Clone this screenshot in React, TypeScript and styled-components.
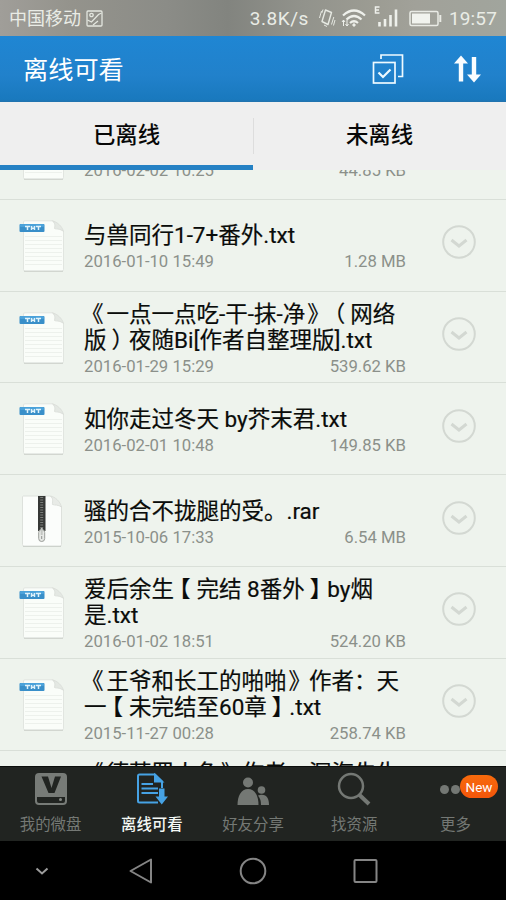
import React from "react";
import styled, { createGlobalStyle } from "styled-components";

const GlobalStyle = createGlobalStyle`
  * { box-sizing: border-box; }
  body {
    margin: 0;
    background: #000;
    font-family: Roboto, "Noto Sans CJK SC", sans-serif;
    text-spacing-trim: space-all;
  }
`;

const Screen = styled.div`
  width: 506px;
  height: 900px;
  display: flex;
  flex-direction: column;
  overflow: hidden;
  background: #eef3ed;
`;

const StatusBar = styled.header`
  height: 36px;
  flex: none;
  display: flex;
  align-items: center;
  padding: 0 9px;
  color: #e9ece6;
  font-size: 19px;
  line-height: 36px;
  background: linear-gradient(90deg, #a09e99 0, #94938c 14%, #8b8c87 33%, #82847f 45%, #92938c 60%, #9c9c93 74%, #a1a199 82%, #a1a59d 100%);
`;

const Carrier = styled.span`
  font-size: 18px;
  width: 77px;
  padding-top: 2px;
  white-space: nowrap;
`;

const Speed = styled.span`
  margin-left: auto;
  padding-top: 2px;
  letter-spacing: 0.55px;
`;

const StatusIcon = styled.svg<{ $gap?: number }>`
  flex: none;
  margin-left: ${(p) => p.$gap ?? 0}px;
`;

const Clock = styled.span`
  margin-left: 7px;
  padding-top: 2px;
  letter-spacing: 0.15px;
`;

const TitleBar = styled.div`
  height: 66px;
  flex: none;
  display: flex;
  align-items: center;
  padding: 0 24px 0 23px;
  background: linear-gradient(#1f86d3, #2181cb 60%, #1979be 96%, #2272ac);
`;

const Title = styled.h1`
  margin: 0 auto 0 0;
  padding-top: 3px;
  color: #fff;
  font-size: 25.2px;
  line-height: 63px;
  font-weight: 400;
`;

const SortIcon = styled.svg`
  margin-left: 49px;
`;

const Tabs = styled.nav`
  height: 68px;
  flex: none;
  display: grid;
  grid-template-columns: 253px 253px;
  background: #efefef;
`;

const Tab = styled.div<{ $active?: boolean }>`
  padding-top: 3px;
  text-align: center;
  font-size: 22.4px;
  font-weight: 500;
  line-height: 60px;
  color: #080808;
  border-bottom: 5px solid ${(p) => (p.$active ? "#2581c4" : "#efefef")};
  ${(p) =>
    !p.$active &&
    `background: linear-gradient(#dddddd, #dddddd) 0 16px / 1px 36px no-repeat #efefef;`}
`;

const List = styled.main`
  flex: 1;
  min-height: 0;
  overflow: hidden;
`;

const Rows = styled.div`
  margin-top: -62px;
`;

const Row = styled.article`
  height: 91.8px;
  display: flex;
  border-bottom: 1px solid #d9dfd8;
  padding: 0 30px 0 19px;
`;

const FileIcon = styled.svg`
  flex: none;
  width: 46px;
  height: 54px;
  margin: 20px 19px 0 0;
`;

const Details = styled.div<{ $lines: number }>`
  width: 322px;
  height: 100%;
  display: flex;
  flex-direction: column;
  gap: ${(p) => (p.$lines > 1 ? 3 : 3)}px;
  padding-top: ${(p) => (p.$lines > 1 ? 9.3 : 22.5)}px;
`;

const Name = styled.div`
  font-size: 22.5px;
  line-height: 26px;
  color: #0a0c0a;
  white-space: pre;
  -webkit-text-stroke: 0.2px #0a0c0a;
`;

const Bracket = styled.span<{ $shift: number }>`
  display: inline-block;
  transform: translateX(${(p) => p.$shift}px);
`;

const Meta = styled.div`
  display: flex;
  justify-content: space-between;
  font-size: 16.7px;
  line-height: 21px;
  color: #8b908a;
`;

const Expand = styled.svg`
  flex: none;
  margin: 25.5px 0 0 auto;
`;

const BottomBar = styled.nav`
  height: 75px;
  flex: none;
  display: grid;
  grid-template-columns: repeat(5, 1fr);
  background: #212421;
  border-top: 1px solid #0c0e0c;
`;

const NavItem = styled.div<{ $active?: boolean }>`
  position: relative;
  display: flex;
  flex-direction: column;
  align-items: center;
  color: ${(p) => (p.$active ? "#f4f8f4" : "#747874")};
  font-size: 15.4px;
  font-weight: ${(p) => (p.$active ? 500 : 400)};
  line-height: 20px;
  padding-top: 3px;
`;

const NavGlyph = styled.svg`
  width: 40px;
  height: 40px;
  margin-bottom: 5px;
`;

const Badge = styled.span`
  position: absolute;
  top: 8px;
  right: 8px;
  width: 38px;
  height: 23px;
  border-radius: 12px;
  background: linear-gradient(#f76a0c, #f4560b);
  color: #fff;
  font-size: 13.5px;
  font-weight: 400;
  line-height: 24px;
  text-align: center;
`;

const SystemBar = styled.footer`
  height: 59px;
  flex: none;
  background: #000;
  display: flex;
  align-items: center;
  padding-left: 32px;
  gap: 76px;
`;

const SystemKey = styled.svg`
  flex: none;
`;

type FileKind = "txt" | "rar";
interface FileEntry {
  kind: FileKind;
  name: string;
  date: string;
  size: string;
}

const files: FileEntry[] = [
  { kind: "txt", name: " ", date: "2016-02-02 10:25", size: "44.85 KB" },
  { kind: "txt", name: "与兽同行1-7+番外.txt", date: "2016-01-10 15:49", size: "1.28 MB" },
  { kind: "txt", name: "《一点一点吃-干-抹-净》（网络\n版）夜随Bi[作者自整理版].txt", date: "2016-01-29 15:29", size: "539.62 KB" },
  { kind: "txt", name: "如你走过冬天 by芥末君.txt", date: "2016-02-01 10:48", size: "149.85 KB" },
  { kind: "rar", name: "骚的合不拢腿的受。.rar", date: "2015-10-06 17:33", size: "6.54 MB" },
  { kind: "txt", name: "爱后余生【完结 8番外】by烟\n是.txt", date: "2016-01-02 18:51", size: "524.20 KB" },
  { kind: "txt", name: "《王爷和长工的啪啪》作者：天\n一【未完结至60章】.txt", date: "2015-11-27 00:28", size: "258.74 KB" },
  { kind: "txt", name: "《德莱罗人鱼》作者：深海先生\n ", date: "", size: "" },
];

const bracketShift: Record<string, number> = {
  "《": -3,
  "》": 2,
  "（": -5,
  "）": 5,
  "【": -6,
  "】": 5,
};

function FileName({ text }: { text: string }) {
  return (
    <Name>
      {text.split(/([《》（）【】])/).map((part, i) =>
        part in bracketShift ? (
          <Bracket key={i} $shift={bracketShift[part]}>
            {part}
          </Bracket>
        ) : (
          part
        ),
      )}
    </Name>
  );
}

function FileGlyph({ kind }: { kind: FileKind }) {
  if (kind === "rar") {
    return (
      <FileIcon viewBox="0 0 46 54">
        <path d="M4 1H31.500L42.500 12V49.500Q42.500 51 41 51H5Q3.500 51 3.500 49.500V1.500Z" fill="#fbfdfb" stroke="#dde1dc" />
        <path d="M4 51.500H42" stroke="#cdd2cc" />
        <path d="M31.500 1C35 4 33 8 33.500 9.500C36 10.500 39 9.500 42.500 12C41 6 36 2 31.500 1Z" fill="#e8ebe7" stroke="#d8dcd7" strokeWidth=".8" />
        <rect x="19" y="1" width="7.500" height="35" fill="#363836" />
        <path d="M22.700 2V33" stroke="#7c7f7c" strokeWidth="3" strokeDasharray="1 1.500" />
        <rect x="19.700" y="34.500" width="6" height="12" rx="3" fill="#e7e9e6" stroke="#9a9d99" />
        <path d="M22.700 33V40" stroke="#c3c6c2" strokeWidth="2" />
        <path d="M22.700 41V44" stroke="#8e928e" />
      </FileIcon>
    );
  }
  return (
    <FileIcon viewBox="0 0 46 54">
      <path d="M6 .8H33.500L44.500 11V49.500Q44.500 51 43 51H6Q4.500 51 4.500 49.500V2Q4.500 .8 6 .8Z" fill="#fafdf9" stroke="#e1e5e0" />
      <path d="M5 51.300H44" stroke="#ccd1cb" />
      <path d="M6 16.500H43M6 20.500H43M6 24.500H43M6 28.500H43M6 32.500H43M6 36.500H43M6 40.500H43M6 44.500H43" stroke="#edf1ec" />
      <path d="M33.500 .8C37 4 35.500 7 35.500 8.500C38 9.500 41 8.500 44.500 11.500C43 6 38 2 33.500 .8Z" fill="#e4e8e3" stroke="#d8dcd7" strokeWidth=".8" />
      <rect x=".5" y="4" width="25" height="8" rx="1" fill="#398fc9" />
      <rect x="1" y="4" width="24" height="3" rx="1" fill="#4ba2da" />
      <path d="M6 6.500H11M8.500 6.500V10M12.500 6V10M15.500 6V10M12.500 8.200H15.500M17 6.500H22M19.500 6.500V10" stroke="#dff2fb" strokeWidth="1.500" fill="none" />
    </FileIcon>
  );
}

function FileRow({ file }: { file: FileEntry }) {
  return (
    <Row>
      <FileGlyph kind={file.kind} />
      <Details $lines={file.name.split("\n").length}>
        <FileName text={file.name} />
        <Meta>
          <span>{file.date}</span>
          <span>{file.size}</span>
        </Meta>
      </Details>
      <Expand width="34" height="34" viewBox="0 0 34 34" fill="none" stroke="#d3d8d2">
        <circle cx="17" cy="17" r="15.800" strokeWidth="2" />
        <path d="M9.500 15L17 21L24.500 15" strokeWidth="3" />
      </Expand>
    </Row>
  );
}

export default function App() {
  return (
    <>
      <GlobalStyle />
      <Screen>
        <StatusBar>
          <Carrier>中国移动</Carrier>
          <StatusIcon width="17" height="17" viewBox="0 0 17 17" fill="none" stroke="#e3e6df" strokeWidth="1.300">
            <rect x="1" y="1" width="15" height="15" rx="1" />
            <circle cx="5.500" cy="5" r="1.700" />
            <path d="M1.500 10L5.500 12L12.500 4.500L15.500 3M7 15L12 11" />
          </StatusIcon>
          <Speed>3.8K/s</Speed>
          <StatusIcon $gap={9} width="18" height="20" viewBox="0 0 18 20" fill="none" stroke="#e6e9e2" strokeWidth="1.400">
            <path d="M7.500 2L13.500 4.500L10 16.500L4 13.500Z" strokeLinejoin="round" />
            <path d="M3.500 3L1.500 10M5 1.500L3.800 5M15.800 9L13.500 16.500M17 12L15.500 17.500M6 17L9 18.500" strokeWidth="1" />
          </StatusIcon>
          <StatusIcon $gap={5} width="26" height="20" viewBox="0 0 26 20" fill="none" stroke="#eef0eb" strokeWidth="2.200">
            <path d="M2 7.500Q13 -2.500 24 7.500M5.500 11.500Q13 4.500 20.500 11.500M9 15Q13 11.500 17 15" />
            <circle cx="13" cy="17" r="1.200" fill="#eef0eb" strokeWidth="1" />
            <path d="M2.500 12V18M6 12V18M1 14L2.500 12L4 14M4.500 16L6 18L7.500 16" strokeWidth="1" />
          </StatusIcon>
          <StatusIcon $gap={6} width="26" height="26" viewBox="0 0 26 26" stroke="#eef0eb" fill="none">
            <path d="M6.500 2H2.500V8H6.500M2.500 5H6" strokeWidth="1.500" />
            <path d="M6.500 17V21.500M12 14V21.500M17.500 10V21.500M23 4.500V21.500" strokeWidth="2.600" />
          </StatusIcon>
          <StatusIcon $gap={10} width="33" height="17" viewBox="0 0 33 17">
            <rect x="1" y="1.500" width="28" height="14" rx="1.500" fill="none" stroke="#e9ebe5" strokeWidth="1.500" />
            <rect x="3" y="3.500" width="18" height="10" fill="#f1f3ee" />
            <path d="M31.300 5V12" stroke="#e9ebe5" strokeWidth="2" />
          </StatusIcon>
          <Clock>19:57</Clock>
        </StatusBar>

        <TitleBar>
          <Title>离线可看</Title>
          <svg width="32" height="32" viewBox="0 0 32 32" fill="none" stroke="#eefaff" strokeWidth="1.700">
            <path d="M9 6V2H30.500V23.500H26" />
            <rect x="1.500" y="9.500" width="21.500" height="20.500" />
            <path d="M6.500 19.500L11 24L18.500 16.500" strokeWidth="2.200" />
          </svg>
          <SortIcon width="29" height="28" viewBox="0 0 29 28" fill="#fafdff">
            <path d="M8 .5L15 8.500H10.200V26.500H5.800V8.500H1Z" />
            <path d="M18.800 2H23.200V19.500H28L21 27.500L14 19.500H18.800Z" />
          </SortIcon>
        </TitleBar>

        <Tabs>
          <Tab $active>已离线</Tab>
          <Tab>未离线</Tab>
        </Tabs>

        <List>
          <Rows>
            {files.map((file, i) => (
              <FileRow key={i} file={file} />
            ))}
          </Rows>
        </List>

        <BottomBar>
          <NavItem>
            <NavGlyph viewBox="0 0 40 40">
              <rect x="4" y="3" width="32" height="32" rx="4" fill="#777b77" />
              <path d="M10.500 6.500H17L20.500 18L24 6.500H30L23.500 23H17.500Z" fill="#212421" />
              <path d="M6 27H34V31Q34 33 32 33H8Q6 33 6 31Z" fill="#212421" />
              <circle cx="29.500" cy="29.500" r="1.500" fill="#858985" />
            </NavGlyph>
            我的微盘
          </NavItem>
          <NavItem $active>
            <NavGlyph viewBox="0 0 40 40" fill="none" stroke="#46a2e4" strokeWidth="2">
              <path d="M26 32.500H7.500Q6 32.500 6 31V6Q6 4.500 7.500 4.500H23L30 11.500V18" />
              <path d="M23 5V11.500H30Z" fill="#46a2e4" />
              <path d="M9.500 14H21M9.500 18.500H26M9.500 23H26" />
              <path d="M27 18.500H32.500V26.500H36L29.750 34.500L23.500 26.500H27Z" fill="#46a2e4" stroke="none" />
            </NavGlyph>
            离线可看
          </NavItem>
          <NavItem>
            <NavGlyph viewBox="0 0 40 40" fill="#747874">
              <circle cx="15" cy="12.500" r="5" />
              <path d="M4.500 35C4.500 26 8 19 15 19S25.500 26 25.500 35Z" />
              <circle cx="28.500" cy="20" r="3.800" />
              <path d="M27 25C34 24 36 29 36 35H28Q28 29 25 25.500Z" />
            </NavGlyph>
            好友分享
          </NavItem>
          <NavItem>
            <NavGlyph viewBox="0 0 40 40" fill="none" stroke="#747874">
              <circle cx="17" cy="16" r="12" strokeWidth="2.500" />
              <path d="M25 24.500L35 34" strokeWidth="4" />
            </NavGlyph>
            找资源
          </NavItem>
          <NavItem>
            <NavGlyph viewBox="0 0 40 40" fill="#747874">
              <circle cx="9.500" cy="19.500" r="4.500" />
              <circle cx="20.500" cy="19.500" r="4.500" />
              <circle cx="31.500" cy="19.500" r="4.500" />
            </NavGlyph>
            更多
            <Badge>New</Badge>
          </NavItem>
        </BottomBar>

        <SystemBar>
          <SystemKey width="20" height="20" viewBox="0 0 20 20" fill="none" stroke="#9c9c9c" strokeWidth="2">
            <path d="M4.500 7.500L10 12.500L15.500 7.500" />
          </SystemKey>
          <SystemKey width="26" height="28" viewBox="0 0 26 28" fill="none" stroke="#858585" strokeWidth="2">
            <path d="M23 2.500V25.500L2.500 14Z" strokeLinejoin="round" />
          </SystemKey>
          <SystemKey width="38" height="28" viewBox="0 0 38 28" fill="none" stroke="#858585" strokeWidth="2">
            <circle cx="23" cy="14" r="12.300" />
          </SystemKey>
          <SystemKey width="36" height="28" viewBox="0 0 36 28" fill="none" stroke="#858585" strokeWidth="2">
            <rect x="10.500" y="3" width="22" height="22" rx="1" />
          </SystemKey>
        </SystemBar>
      </Screen>
    </>
  );
}
